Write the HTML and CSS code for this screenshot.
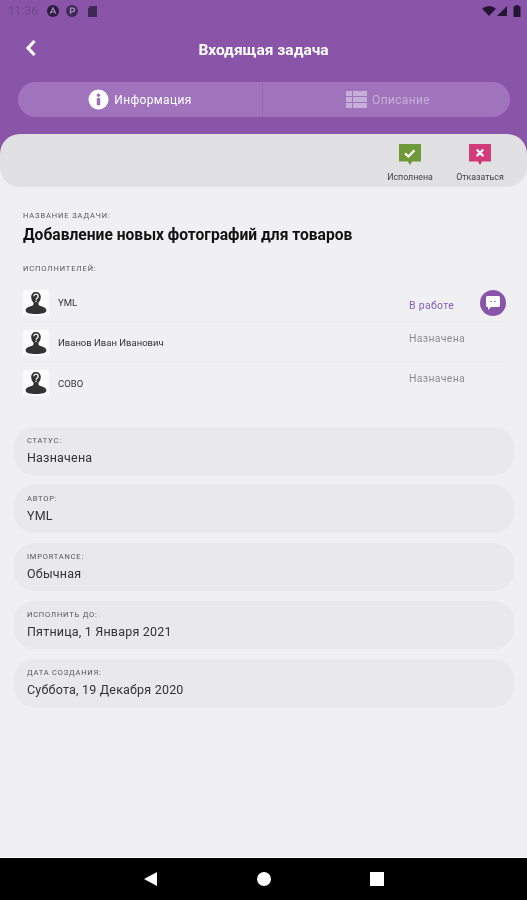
FILE: index.html
```html
<!DOCTYPE html>
<html lang="ru">
<head>
<meta charset="utf-8">
<title>Входящая задача</title>
<link rel="stylesheet" href="styles.css">
</head>
<body>
<div class="screen">
  <div class="hero">
    <div class="statusbar">
      <div class="status-left">
        <span class="clock">11:36</span>
        <svg class="st-ic" viewBox="0 0 12 12"><circle cx="6" cy="6" r="6" fill="#2c1c3e"/><path d="M3.2 8.8 6 2.8l2.8 6M4.500 7h3" fill="none" stroke="#a88cc0" stroke-width="1.2"/></svg>
        <svg class="st-ic" viewBox="0 0 12 12"><circle cx="6" cy="6" r="6" fill="#3e2a54"/><path d="M4.500 9V3.2h2.400a1.700 1.700 0 0 1 0 3.400H4.500" fill="none" stroke="#a88cc0" stroke-width="1.3"/></svg>
        <svg class="st-ic sd" viewBox="0 0 10 12"><path d="M2.500 0H10v12H0V2.500z" fill="#3e2a54"/></svg>
      </div>
      <div class="status-right">
        <svg class="wifi" viewBox="0 0 14 10"><path d="M0 2.500Q7-2.500 14 2.500L7 10z" fill="#241532"/></svg>
        <svg class="signal" viewBox="0 0 10 10"><path d="M10 0v10H0z" fill="#241532"/></svg>
        <svg class="batt" viewBox="0 0 7 12"><path d="M2 0h3v1.200h2V12H0V1.200h2z" fill="#241532"/></svg>
      </div>
    </div>
    <div class="titlebar">
      <svg class="back" viewBox="0 0 12 18"><path d="M9.500 2 3 9l6.500 7" fill="none" stroke="#fff" stroke-width="3.200"/></svg>
      <h1 class="title">Входящая задача</h1>
    </div>
    <div class="tabs">
      <div class="tab active">
        <svg class="tab-ic" viewBox="0 0 22 22"><circle cx="11" cy="11" r="10.500" fill="#fff"/><circle cx="11" cy="6.500" r="1.800" fill="#9a70b9"/><rect x="9.200" y="9.500" width="3.600" height="7.500" rx=".6" fill="#9a70b9"/></svg>
        <span>Информация</span>
      </div>
      <div class="tab second">
        <svg class="tab-ic grid" viewBox="0 0 21 17"><g fill="#c6afd6"><rect width="6" height="5"/><rect x="7" width="14" height="5"/><rect y="6" width="6" height="5"/><rect x="7" y="6" width="14" height="5"/><rect y="12" width="6" height="5"/><rect x="7" y="12" width="14" height="5"/></g></svg>
        <span>Описание</span>
      </div>
    </div>
  </div>
  <div class="panel-wrap">
    <div class="panel">
      <div class="action">
        <svg class="action-ic" viewBox="0 0 20 20"><path d="M0 0h20v16h-8l-2 3-2-3H0z" fill="#6e9a3a"/><path d="m5.500 8.500 3 2.800 5.500-5.500" fill="none" stroke="#fff" stroke-width="2"/></svg>
        <span>Исполнена</span>
      </div>
      <div class="action">
        <svg class="action-ic" viewBox="0 0 20 20"><path d="M0 0h20v16h-8l-2 3-2-3H0z" fill="#d33a79"/><path d="m7 5 6 6m0-6-6 6" fill="none" stroke="#fff" stroke-width="2"/></svg>
        <span>Отказаться</span>
      </div>
    </div>
  </div>
  <main class="content">
    <section class="task">
      <div class="caption">НАЗВАНИЕ ЗАДАЧИ:</div>
      <div class="task-name">Добавление новых фотографий для товаров</div>
      <div class="caption performers-cap">ИСПОЛНИТЕЛЕЙ:</div>
    </section>
    <section class="people">
      <div class="person">
        <svg class="avatar" viewBox="0 0 26 26"><use href="#who"/></svg>
        <span class="name">YML</span>
        <span class="state working">В работе</span>
        <span class="chat"><svg viewBox="0 0 16 16"><path d="M2.500 1h11A1.500 1.500 0 0 1 15 2.500v8a1.500 1.500 0 0 1-1.500 1.500H6l-3 3v-3h-.5A1.500 1.500 0 0 1 1 10.500v-8A1.500 1.500 0 0 1 2.500 1z" fill="#fff"/><path d="M5.500 6.500h1.500m2 0h1.500" stroke="#8a55a9" stroke-width="1"/></svg></span>
      </div>
      <div class="person">
        <svg class="avatar" viewBox="0 0 26 26"><use href="#who"/></svg>
        <span class="name">Иванов Иван Иванович</span>
        <span class="state raised">Назначена</span>
      </div>
      <div class="person">
        <svg class="avatar" viewBox="0 0 26 26"><use href="#who"/></svg>
        <span class="name">СОВО</span>
        <span class="state raised">Назначена</span>
      </div>
    </section>
    <section class="cards">
      <div class="card"><div class="card-label">СТАТУС:</div><div class="card-value">Назначена</div></div>
      <div class="card"><div class="card-label">АВТОР:</div><div class="card-value">YML</div></div>
      <div class="card"><div class="card-label">IMPORTANCE:</div><div class="card-value">Обычная</div></div>
      <div class="card"><div class="card-label">ИСПОЛНИТЬ ДО:</div><div class="card-value">Пятница, 1 Января 2021</div></div>
      <div class="card"><div class="card-label">ДАТА СОЗДАНИЯ:</div><div class="card-value">Суббота, 19 Декабря 2020</div></div>
    </section>
  </main>
  <nav class="navbar">
    <svg class="nav-ic" viewBox="0 0 14 14"><path d="M0 7 13 0v14z" fill="#fff"/></svg>
    <svg class="nav-ic" viewBox="0 0 14 14"><circle cx="7" cy="7" r="7" fill="#fff"/></svg>
    <svg class="nav-ic" viewBox="0 0 14 14"><rect width="14" height="14" fill="#fff"/></svg>
  </nav>
</div>
<svg class="defs" width="0" height="0" aria-hidden="true"><defs>
  <g id="who">
    <rect width="26" height="26" rx="2" fill="#fbfbfb"/>
    <path d="M13 2c3 0 4.800 2.100 4.800 5 0 2.500-1.100 4.600-2.400 5.700-.4 1.600.4 2.600 2 3.200 3 .8 6 1.900 6 4.500 0 2.300-4.400 3.600-10.400 3.600S2.600 22.700 2.600 20.400c0-2.600 3-3.700 6-4.500 1.600-.6 2.400-1.600 2-3.200-1.300-1.100-2.400-3.200-2.400-5.700C8.200 4.100 10 2 13 2z" fill="#333"/>
    <path d="M10.900 6.300c0-2.800 4.300-2.800 4.300 0 0 1.700-2.100 1.700-2.100 3.400M13.100 10.800v1.300" fill="none" stroke="#fff" stroke-width="1.300"/>
  </g>
</defs></svg>
</body>
</html>
```
FILE: styles.css
```css
* { box-sizing: border-box; }
html, body { margin: 0; padding: 0; }
body { font-family: Roboto, "Noto Sans", sans-serif; background: #f0f0f2; }
.defs { display: block; height: 0; }
.screen { width: 527px; height: 900px; display: flex; flex-direction: column; overflow: hidden; filter: blur(0.5px); }

.hero { background: #8a55a9; height: 134px; display: flex; flex-direction: column; flex: none; }
.statusbar { height: 22px; display: flex; justify-content: space-between; align-items: center; padding: 0 6px 0 8px; }
.status-left { display: flex; align-items: center; gap: 7px; }
.clock { font-size: 12px; color: #6f4a8a; width: 32px; }
.st-ic { width: 12px; height: 12px; }
.st-ic.sd { width: 9px; height: 11px; margin-left: 3px; }
.status-right { display: flex; align-items: center; gap: 1px; }
.wifi { width: 14px; height: 10px; }
.signal { width: 10px; height: 10px; }
.batt { width: 8px; height: 12px; margin-left: 5px; }

.titlebar { position: relative; height: 56px; display: flex; align-items: center; justify-content: center; }
.back { position: absolute; left: 25px; top: 17px; width: 12px; height: 18px; }
.title { margin: 0; font-size: 15.500px; font-weight: 700; color: #fff; }

.tabs { margin: 4px 17px 0 18px; height: 35px; border-radius: 18px; background: #a074bc; display: flex; }
.tab { flex: 1; display: flex; align-items: center; justify-content: center; gap: 5px; font-size: 12px; color: #c6afd6; letter-spacing: .35px; }
.tab.active { color: #fff; border-right: 1px solid #9669b3; }
.tab.second { padding-left: 3px; }
.tab-ic { width: 21px; height: 21px; }
.tab-ic.grid { height: 17px; }

.panel-wrap { flex: none; background: linear-gradient(#8a55a9 50%, #f0f0f2 50%); }
.panel { height: 53px; background: #e1e1e3; border-radius: 20px; display: flex; justify-content: flex-end; padding: 10px 22px 0 0; gap: 20px; }
.action { display: flex; flex-direction: column; align-items: center; gap: 6px; font-size: 8.800px; color: #444; width: 50px; line-height: 11px; }
.action-ic { width: 22px; height: 22px; }

.content { flex: 1; display: flex; flex-direction: column; background: #f0f0f2; }
.task { padding: 24px 22px 0 23px; }
.caption { font-size: 7.500px; color: #555; letter-spacing: .9px; line-height: 10px; }
.task-name { margin-top: 3px; font-size: 15.600px; font-weight: 700; color: #111; line-height: 22px; }
.performers-cap { margin-top: 18px; }

.people { padding: 9px 21px 0 23px; }
.person { height: 40px; display: flex; align-items: center; border-bottom: 1px solid #ecedef; }
.person:last-child { border-bottom: 0; }
.avatar { width: 26px; height: 26px; flex: none; }
.name { margin-left: 9px; font-size: 9.500px; color: #333; flex: 1; }
.state { width: 71px; font-size: 10.500px; color: #8d8d8d; letter-spacing: .3px; }
.working { color: #7f62bd; padding-top: 5px; }
.raised { margin: -9px 26px 0 0; }
.chat { width: 26px; height: 26px; border-radius: 50%; background: #8a55a9; display: flex; align-items: center; justify-content: center; flex: none; }
.chat svg { width: 16px; height: 16px; }

.cards { margin-top: 24px; padding: 0 13px 0 14px; display: flex; flex-direction: column; gap: 10px; }
.card { height: 48px; border-radius: 20px; background: #e9e8ec; padding: 9px 13px 0; }
.card-label { font-size: 7.500px; color: #555; letter-spacing: .8px; line-height: 9px; }
.card-value { margin-top: 4px; font-size: 12.500px; color: #333; line-height: 17px; letter-spacing: .2px; }

.navbar { height: 43px; flex: none; background: #000; border-top: 1px solid #fff; display: flex; align-items: center; justify-content: center; gap: 99px; }
.nav-ic { width: 14px; height: 14px; }
```
